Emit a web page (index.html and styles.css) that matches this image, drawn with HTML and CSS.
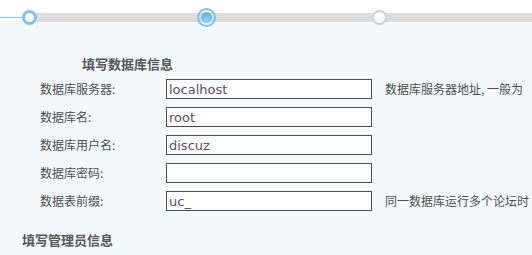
FILE: index.html
```html
<!DOCTYPE html>
<html lang="zh-CN">
<head>
    <meta charset="UTF-8">
    <title>安装向导</title>
    <link rel="stylesheet" href="styles.css">
</head>
<body>

<div class="steps">
    <div class="done-line"></div>
    <div class="track"></div>
    <span class="dot dot-done" style="left: 22px"></span>
    <span class="dot dot-current" style="left: 197px"></span>
    <span class="dot dot-todo" style="left: 372px"></span>
</div>

<div class="main">
    <h3 class="title title-db">填写数据库信息</h3>
    <div class="form">
        <label>数据库服务器:</label>
        <input type="text" value="localhost">
        <span class="tip">数据库服务器地址, 一般为</span>

        <label>数据库名:</label>
        <input type="text" value="root">
        <span class="tip"></span>

        <label>数据库用户名:</label>
        <input type="text" value="discuz">
        <span class="tip"></span>

        <label>数据库密码:</label>
        <input type="password" value="">
        <span class="tip"></span>

        <label>数据表前缀:</label>
        <input type="text" value="uc_">
        <span class="tip">同一数据库运行多个论坛时</span>
    </div>
    <h3 class="title title-admin">填写管理员信息</h3>
</div>

</body>
</html>
```

FILE: styles.css
```css
body {
    margin: 0;
    padding: 0;
    background-color: #f4f9fd;
    font-family: "Noto Sans CJK SC", "DejaVu Sans", sans-serif;
    font-size: 12px;
    color: #555;
    overflow: hidden;
}

.steps {
    position: relative;
    height: 22px;
    background-color: #fff;
}

.track {
    position: absolute;
    left: 29px;
    right: 0;
    top: 13px;
    height: 9px;
    background-color: #dcdcdc;
}

.done-line {
    position: absolute;
    left: 0;
    top: 17px;
    width: 24px;
    height: 1px;
    background-color: #8ccbf0;
}

.dot {
    position: absolute;
    box-sizing: border-box;
    border-radius: 50%;
    background-color: #fff;
}

.dot-done {
    top: 10px;
    width: 15px;
    height: 15px;
    border: 3px solid #7cc4ee;
}

.dot-current {
    top: 8px;
    width: 19px;
    height: 19px;
    border: 2px solid #7cc4ee;
    padding: 2px;
    background-clip: content-box;
    background-image: radial-gradient(circle at 50% 70%, #8fd0f6, #3b9fe3);
}

.dot-todo {
    top: 10px;
    width: 15px;
    height: 15px;
    border: 2px solid #cfcfcf;
}

.main {
    padding-top: 32px;
}

.title {
    margin: 0;
    font-size: 13px;
    line-height: 20px;
    font-weight: bold;
    color: #555;
}

.title-db {
    margin-left: 82px;
    margin-bottom: 5px;
}

.title-admin {
    margin-top: 19px;
    margin-left: 22px;
}

.form {
    display: grid;
    grid-template-columns: 126px 206px auto;
    row-gap: 8px;
    margin-left: 40px;
    align-items: center;
}

.form label {
    line-height: 20px;
    color: #4d4d4d;
}

.form input {
    box-sizing: border-box;
    width: 206px;
    height: 20px;
    margin: 0;
    padding: 0 2px;
    border: 1px solid #4d4d4d;
    background-color: #fff;
    font-family: "DejaVu Sans", sans-serif;
    font-size: 13px;
    color: #5a4a6e;
    outline: none;
}

.tip {
    margin-left: 13px;
    white-space: nowrap;
    color: #4d4d4d;
    line-height: 20px;
}
```
